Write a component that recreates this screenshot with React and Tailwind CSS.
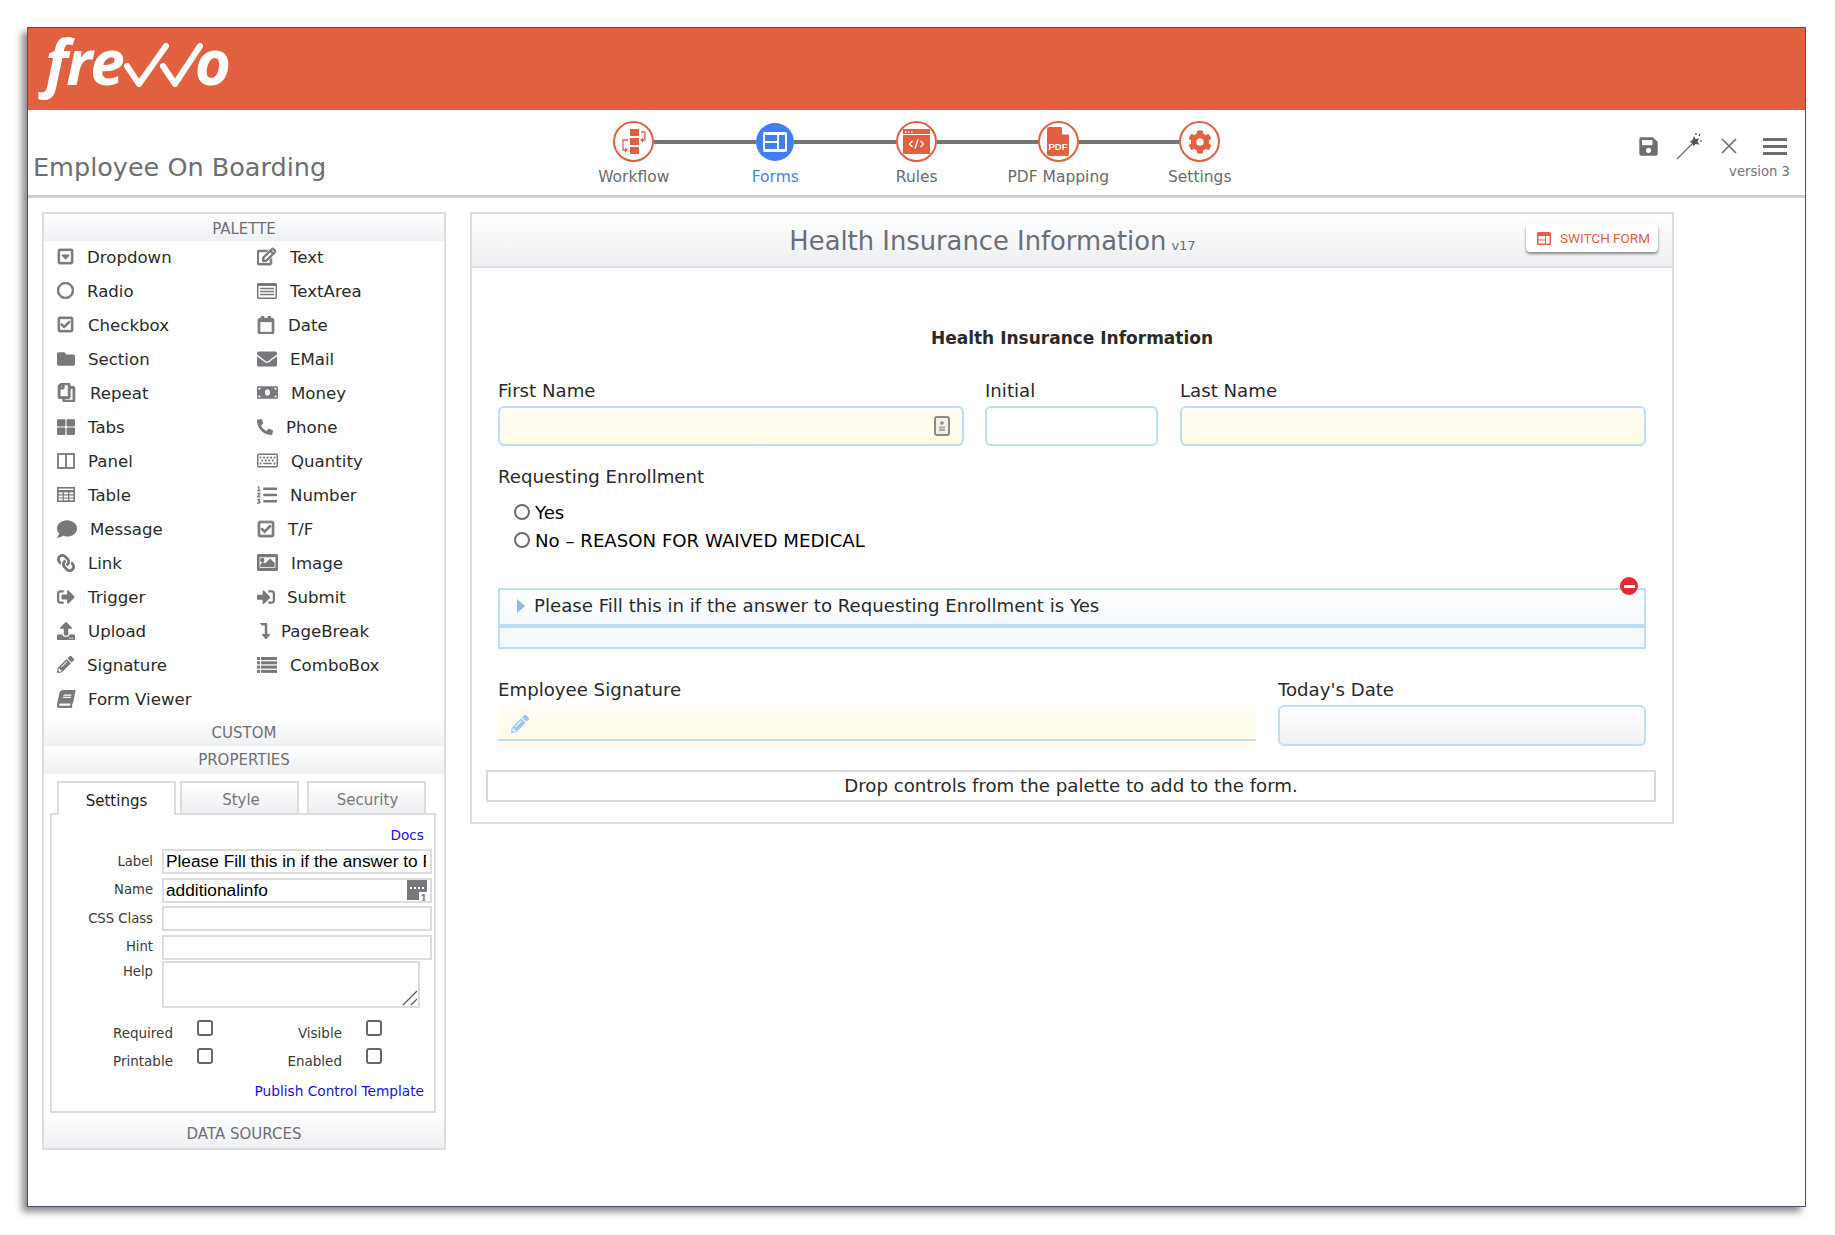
import React from "react";
import {
  FaRegCaretSquareDown, FaRegCircle, FaRegCheckSquare, FaFolder, FaRegCopy, FaThLarge, FaComment,
  FaLink, FaSignOutAlt, FaUpload, FaPencilAlt, FaBook, FaRegEdit, FaRegCalendar, FaEnvelope, FaMoneyBill,
  FaPhone, FaRegKeyboard, FaListOl, FaRegImage, FaSignInAlt, FaLevelDownAlt, FaCog, FaSave,
} from "react-icons/fa";

const ORANGE = "#e06040";
const heavy = { stroke: "currentColor", strokeWidth: 28 };

function PanelIcon() {
  return (
    <svg width="18" height="16" viewBox="0 0 18 16" fill="none" stroke="currentColor" strokeWidth="1.8">
      <rect x="1" y="1" width="16" height="14" />
      <path d="M9 1v14" />
    </svg>
  );
}

function TableIcon() {
  return (
    <svg width="18" height="15" viewBox="0 0 18 15" fill="none" stroke="currentColor">
      <rect x="0.8" y="0.8" width="16.400" height="13.400" strokeWidth="1.600" />
      <path d="M0 4.200h18" strokeWidth="2.400" />
      <path d="M0 7.800h18M0 11h18M6.300 3v12M11.700 3v12" strokeWidth="1.200" />
    </svg>
  );
}

function TextAreaIcon() {
  return (
    <svg width="20" height="16" viewBox="0 0 20 16">
      <rect width="20" height="16" rx="1.5" fill="currentColor" />
      <rect x="1.5" y="3" width="17" height="11.5" fill="#fff" />
      <path d="M3 5.5h14M3 8.5h14M3 11.5h14" stroke="currentColor" strokeWidth="1.4" />
    </svg>
  );
}

function ComboIcon() {
  return (
    <svg width="20" height="16" viewBox="0 0 20 16" fill="currentColor">
      <rect y="0" width="3" height="3" />
      <rect y="4.300" width="3" height="3" />
      <rect y="8.600" width="3" height="3" />
      <rect y="12.900" width="3" height="3" />
      <rect x="4" y="0" width="16" height="3" />
      <rect x="4" y="4.300" width="16" height="3" />
      <rect x="4" y="8.600" width="16" height="3" />
      <rect x="4" y="12.900" width="16" height="3" />
    </svg>
  );
}

const leftItems = [
  { icon: <FaRegCaretSquareDown size={17} {...heavy} />, label: "Dropdown", w: "w-[30px]" },
  { icon: <FaRegCircle size={17} {...heavy} />, label: "Radio", w: "w-[30px]" },
  { icon: <FaRegCheckSquare size={17} {...heavy} />, label: "Checkbox", w: "w-[31px]" },
  { icon: <FaFolder size={18} />, label: "Section", w: "w-[31px]" },
  { icon: <FaRegCopy size={19} className="-scale-x-100" {...heavy} />, label: "Repeat", w: "w-[33px]" },
  { icon: <FaThLarge size={18} />, label: "Tabs", w: "w-[31px]" },
  { icon: <PanelIcon />, label: "Panel", w: "w-[31px]" },
  { icon: <TableIcon />, label: "Table", w: "w-[31px]" },
  { icon: <FaComment size={20} />, label: "Message", w: "w-[33px]" },
  { icon: <FaLink size={18} className="-scale-x-100" />, label: "Link", w: "w-[31px]" },
  { icon: <FaSignOutAlt size={18} />, label: "Trigger", w: "w-[31px]" },
  { icon: <FaUpload size={18} />, label: "Upload", w: "w-[31px]" },
  { icon: <FaPencilAlt size={17} />, label: "Signature", w: "w-[30px]" },
  { icon: <FaBook size={18} className="-skew-x-12" />, label: "Form Viewer", w: "w-[31px]" },
];

const rightItems = [
  { icon: <FaRegEdit size={19} {...heavy} />, label: "Text", w: "w-[33px]" },
  { icon: <TextAreaIcon />, label: "TextArea", w: "w-[33px]" },
  { icon: <FaRegCalendar size={18} {...heavy} />, label: "Date", w: "w-[31px]" },
  { icon: <FaEnvelope size={20} />, label: "EMail", w: "w-[33px]" },
  { icon: <FaMoneyBill size={21} />, label: "Money", w: "w-[34px]" },
  { icon: <FaPhone size={16} className="-scale-x-100" />, label: "Phone", w: "w-[29px]" },
  { icon: <FaRegKeyboard size={21} />, label: "Quantity", w: "w-[34px]" },
  { icon: <FaListOl size={20} />, label: "Number", w: "w-[33px]" },
  { icon: <FaRegCheckSquare size={18} {...heavy} />, label: "T/F", w: "w-[31px]" },
  { icon: <FaRegImage size={21} {...heavy} />, label: "Image", w: "w-[34px]" },
  { icon: <FaSignInAlt size={18} />, label: "Submit", w: "w-[30px]" },
  { icon: <FaLevelDownAlt size={16} />, label: "PageBreak", w: "w-[24px]" },
  { icon: <ComboIcon />, label: "ComboBox", w: "w-[33px]" },
];

function PaletteItem({ item }) {
  return (
    <div className="flex items-center h-[34px] text-[16.6px] text-[#2a2a2a]">
      <span className={`${item.w} shrink-0 flex items-center -mt-[3px] text-[#77777c]`}>{item.icon}</span>
      <span>{item.label}</span>
    </div>
  );
}

function SectionBar({ title, className = "pt-[3px]" }) {
  return (
    <div className={`flex items-center justify-center bg-gradient-to-b from-white to-[#edeff2] text-[15px] text-[#6f6f74] ${className}`}>
      {title}
    </div>
  );
}

function WorkflowGlyph() {
  return (
    <svg width="26" height="28" viewBox="0 0 26 28" fill={ORANGE}>
      <rect x="9" y="1" width="9" height="7" />
      <rect x="9" y="10" width="9" height="7" />
      <rect x="9" y="19" width="9" height="7" />
      <path d="M20 4h4v8h-3" fill="none" stroke={ORANGE} strokeWidth="1.3" />
      <path d="M22 9.5v5l-3-2.5z" />
      <path d="M7 12H2v10h2" fill="none" stroke={ORANGE} strokeWidth="1.3" />
      <path d="M4 19.5v5l3-2.5z" />
    </svg>
  );
}

function FormsGlyph() {
  return (
    <svg width="24" height="20" viewBox="0 0 24 20">
      <rect width="24" height="20" rx="1.5" fill="#fff" />
      <rect x="2" y="3" width="12" height="6" fill="#3f7fef" />
      <rect x="2" y="11" width="12" height="6" fill="#3f7fef" />
      <rect x="16" y="3" width="6" height="14" fill="#3f7fef" />
    </svg>
  );
}

function RulesGlyph() {
  return (
    <svg width="27" height="25" viewBox="0 0 27 25">
      <rect y="0" width="27" height="25" fill={ORANGE} />
      <path d="M0 5.5h27" stroke="#fff" strokeWidth="1" />
      <path d="M2 3h1.5M5 3h1.5M8 3h1.5" stroke="#fff" strokeWidth="1.4" />
      <path d="M9.5 12l-3 3 3 3M17.5 12l3 3-3 3M15 10.5l-3 9" fill="none" stroke="#fff" strokeWidth="1.4" />
    </svg>
  );
}

function PdfGlyph() {
  return (
    <svg width="22" height="29" viewBox="0 0 22 29">
      <path d="M2 0h12l8 8v19a2 2 0 0 1-2 2H2a2 2 0 0 1-2-2V2a2 2 0 0 1 2-2z" fill={ORANGE} />
      <path d="M15 0l7 7h-7z" fill="#fff" />
      <path d="M15.5 0.5v6.500h6.500" fill="none" stroke="#fff" strokeWidth="1" />
      <text x="11" y="23" textAnchor="middle" fontFamily="'Liberation Sans',sans-serif" fontWeight="700" fontSize="9.500" fill="#fff">PDF</text>
    </svg>
  );
}

const steps = [
  { label: "Workflow", glyph: <WorkflowGlyph /> },
  { label: "Forms", glyph: <FormsGlyph />, active: true },
  { label: "Rules", glyph: <RulesGlyph /> },
  { label: "PDF Mapping", glyph: <PdfGlyph /> },
  { label: "Settings", glyph: <FaCog size={24} color={ORANGE} /> },
];

function Step({ step, index }) {
  return (
    <div className="w-[141.5px] flex flex-col items-center">
      <div className="w-full flex items-center h-[41px]">
        <div className={`flex-1 h-[4px] ${index === 0 ? "" : "bg-[#757575]"}`} />
        <div
          className={
            step.active
              ? "w-[38px] h-[38px] rounded-full bg-[#3f7fef] flex items-center justify-center"
              : "w-[41px] h-[41px] rounded-full border-2 border-[#e06040] bg-white flex items-center justify-center"
          }
        >
          {step.glyph}
        </div>
        <div className={`flex-1 h-[4px] ${index === steps.length - 1 ? "" : "bg-[#757575]"}`} />
      </div>
      <div className={`mt-[5px] leading-[20px] text-[15.5px] ${step.active ? "text-[#4a80ee]" : "text-[#6b6b6b]"}`}>
        {step.label}
      </div>
    </div>
  );
}

function TextField({ value, icon }) {
  return (
    <div className="relative h-[25px] border-2 border-[#dcdcdc] bg-white pl-[2px] overflow-hidden whitespace-nowrap font-['Liberation_Sans',sans-serif] text-[17.3px] leading-[21px] text-black">
      <div className="w-[260px] overflow-hidden">{value}</div>
      {icon}
    </div>
  );
}

function PropRow({ label, value, icon }) {
  return (
    <div className="flex items-center">
      <div className="w-[103px] pr-[9px] text-right text-[13.2px] text-[#3a3a3a]">{label}</div>
      <div className="w-[270px]">
        <TextField value={value} icon={icon} />
      </div>
    </div>
  );
}

function CheckField({ label, labelClass }) {
  return (
    <div className="flex items-start h-[28px]">
      <div className={`${labelClass} text-right text-[13.5px] leading-[18px] text-[#3a3a3a] pt-[4px]`}>{label}</div>
      <div className="ml-[24px] w-[16px] h-[16px] rounded-[3px] border-2 border-[#666] bg-white" />
    </div>
  );
}

function NameIcon() {
  return (
    <svg className="absolute right-[2px] top-0" width="22" height="22" viewBox="0 0 22 22">
      <path d="M1 0h20v20H1z" fill="#77777c" />
      <path d="M4 8h2M8 8h2M12 8h2M16 8h2" stroke="#fff" strokeWidth="2" />
      <rect x="13" y="12" width="9" height="10" fill="#fff" />
      <text x="17.500" y="21.500" textAnchor="middle" fontFamily="'Liberation Sans',sans-serif" fontWeight="700" fontSize="11" fill="#77777c">1</text>
    </svg>
  );
}

function ContactIcon() {
  return (
    <svg className="absolute right-[12px] top-[8px]" width="16" height="20" viewBox="0 0 16 20" fill="none">
      <rect x="1" y="1" width="14" height="18" rx="2" stroke="#8a8a8a" strokeWidth="2" fill="#f4f1e4" />
      <circle cx="8" cy="7" r="1.800" fill="#8a8a8a" />
      <path d="M5 11.500h6M5 14h6" stroke="#a9a9a9" strokeWidth="2" />
    </svg>
  );
}

function FormField({ label, className, inputClass, children }) {
  return (
    <div className={className}>
      <div className="leading-[24px] text-[18.15px] text-[#2a2a2a]">{label}</div>
      <div className={`relative mt-[3px] rounded-[6px] ${inputClass}`}>{children}</div>
    </div>
  );
}

const yellowInput = "h-[40px] border-2 border-[#bfdcf8] bg-gradient-to-b from-[#fffdf6] to-[#fefde3]";

function Radio({ children }) {
  return (
    <div className="flex items-center h-[28px] text-[18.15px] text-black">
      <span className="w-[16px] h-[16px] rounded-full border-2 border-[#6d6d6d] bg-white mr-[5px] -mt-[2px]" />
      {children}
    </div>
  );
}

export default function App() {
  return (
    <div className="min-h-[1235px] bg-white pl-[27px] pt-[27px] font-['DejaVu_Sans',sans-serif]">
      <div className="w-[1779px] h-[1180px] bg-white border border-[#44546a] shadow-[-5px_5px_7px_rgba(0,0,0,0.45)]">
        {/* orange banner */}
        <div className="h-[82px] bg-[#e06040] flex items-start pl-[17px] text-white font-['Open_Sans',sans-serif] italic font-bold text-[62px] leading-[66px]">
          <span className="tracking-[-2px]">fre</span>
          <svg width="79" height="46" viewBox="0 0 79 46" className="mt-[14px] ml-[1px] -mr-[8px] shrink-0" fill="none" stroke="#fff" strokeWidth="6" strokeLinecap="round" strokeLinejoin="round">
            <path d="M3 24l12 18L42 4" />
            <path d="M39 24l12 18L76 4" />
          </svg>
          <span>o</span>
        </div>

        {/* toolbar */}
        <div className="h-[88px] flex items-start border-b-[3px] border-[#cfcfcf]">
          <div className="w-[535px] pl-[5px] pt-[40px] leading-[34px] text-[25.5px] text-[#6b6e74]">Employee On Boarding</div>
          <div className="flex pt-[11px]">
            {steps.map((s, i) => (
              <Step key={s.label} step={s} index={i} />
            ))}
          </div>
          <div className="ml-auto pr-[18px] pt-[22px] flex flex-col items-end">
            <div className="flex items-center h-[28px] text-[#6e6e6e]">
              <FaSave size={21} />
              <svg className="ml-[17px]" width="27" height="27" viewBox="0 0 27 27" fill="none">
                <path d="M1 26L19 8" stroke="#6e6e6e" strokeWidth="1.300" />
                <path d="M18 3l1.500 3 3.500-.5-1.500 3.500 2 2.500-4-.5-2 2.500-1-3.500-3-1 3-2z" fill="#555" />
                <path d="M24 1l-1 2M26 8h-2M20 0v2" stroke="#444" strokeWidth="1.200" />
              </svg>
              <svg className="ml-[18px]" width="16" height="16" viewBox="0 0 16 16" stroke="#6e6e6e" strokeWidth="1.700">
                <path d="M1 1l14 14M15 1L1 15" />
              </svg>
              <div className="ml-[26px] w-[24px] flex flex-col gap-[4px]">
                <div className="h-[3px] bg-[#6e6e6e]" />
                <div className="h-[3px] bg-[#6e6e6e]" />
                <div className="h-[3px] bg-[#6e6e6e]" />
              </div>
            </div>
            <div className="-mr-[3px] mt-[3px] leading-[18px] text-[13.2px] text-[#6e7580]">version 3</div>
          </div>
        </div>

        {/* main */}
        <div className="flex items-start pl-[14px] pt-[14px] gap-[24px]">
          {/* left column */}
          <div className="w-[404px] h-[938px] border-2 border-[#dcdcdc] flex flex-col">
            <SectionBar title="PALETTE" className="h-[27px] pt-[3px]" />
            <div className="grid grid-cols-[200px_1fr] pl-[13px] h-[476px]">
              <div>
                {leftItems.map((item) => (
                  <PaletteItem key={item.label} item={item} />
                ))}
              </div>
              <div>
                {rightItems.map((item) => (
                  <PaletteItem key={item.label} item={item} />
                ))}
              </div>
            </div>
            <SectionBar title="CUSTOM" className="h-[29px] pt-[3px]" />
            <SectionBar title="PROPERTIES" className="h-[28px] pt-[1px]" />

            <div className="pl-[13px] pt-[7px] flex text-[15px]">
              <div className="relative z-10 w-[119px] h-[34px] -mb-[2px] pt-[5px] border-2 border-b-0 border-[#dcdcdc] bg-white flex items-center justify-center text-[#222]">Settings</div>
              <div className="ml-[4px] w-[119px] h-[32px] pt-[5px] pl-[3px] border-2 border-b-0 border-[#dcdcdc] bg-gradient-to-b from-white to-[#edeff2] flex items-center justify-center text-[#77777c]">Style</div>
              <div className="ml-[8px] w-[119px] h-[32px] pt-[5px] pl-[2px] border-2 border-b-0 border-[#dcdcdc] bg-gradient-to-b from-white to-[#edeff2] flex items-center justify-center text-[#77777c]">Security</div>
            </div>
            <div className="relative ml-[6px] w-[386px] h-[300px] border-2 border-[#dcdcdc]">
              <div className="text-right pr-[10px] pt-[11px] leading-[18px] text-[13.7px] text-[#1414d8]">Docs</div>
              <div className="mt-[5px] flex flex-col gap-[3.5px] pl-[7px]">
                <PropRow label="Label" value="Please Fill this in if the answer to Requesting" />
                <PropRow label="Name" value="additionalinfo" icon={<NameIcon />} />
                <PropRow label="CSS Class" value="" />
                <PropRow label="Hint" value="" />
                <div className="flex items-start -mt-[2px]">
                  <div className="w-[103px] pr-[9px] text-right text-[13.2px] text-[#3a3a3a] pt-[1px]">Help</div>
                  <div className="relative w-[258px] h-[47px] border-2 border-[#dcdcdc] bg-white">
                    <svg className="absolute right-0 bottom-0" width="16" height="16" viewBox="0 0 16 16" stroke="#555" strokeWidth="1.200">
                      <path d="M1 15L15 1M9 15l6-6" />
                    </svg>
                  </div>
                </div>
              </div>
              <div className="pl-[7px] mt-[12px] flex flex-col">
                <div className="flex">
                  <CheckField label="Required" labelClass="w-[114px]" />
                  <CheckField label="Visible" labelClass="w-[129px]" />
                </div>
                <div className="flex">
                  <CheckField label="Printable" labelClass="w-[114px]" />
                  <CheckField label="Enabled" labelClass="w-[129px]" />
                </div>
              </div>
              <div className="text-right pr-[10px] mt-[6px] leading-[18px] text-[13.7px] text-[#1414d8]">Publish Control Template</div>
            </div>
            <SectionBar title="DATA SOURCES" className="flex-1 pt-[8px]" />
          </div>

          {/* form canvas */}
          <div className="w-[1204px] h-[612px] border-2 border-[#dcdcdc]">
            <div className="relative h-[54px] border-b-2 border-[#dcdcdc] bg-gradient-to-b from-white to-[#edeff2] flex items-baseline justify-center pt-[7px] pr-[159px] text-[#6b6e74]">
              <span className="text-[25.8px] leading-[40px]">Health Insurance Information</span>
              <span className="ml-[5px] text-[13px]">v17</span>
              <div className="absolute right-[14px] top-[10px] w-[132px] h-[28px] bg-white rounded-[4px] shadow-[0_2px_3px_rgba(0,0,0,0.45)] flex items-center pl-[11px] font-['Roboto',sans-serif] text-[13.5px] text-[#e06040]">
                <svg width="14" height="13" viewBox="0 0 14 13" className="mr-[9px]">
                  <rect width="14" height="13" rx="1.500" fill="#e06040" />
                  <rect x="1.500" y="4" width="6.500" height="3.500" fill="#fff" />
                  <rect x="1.500" y="8.500" width="6.500" height="3" fill="#fff" />
                  <rect x="9" y="4" width="3.500" height="7.500" fill="#fff" />
                </svg>
                SWITCH FORM
              </div>
            </div>

            <div className="pl-[26px] pr-[26px]">
              <div className="mt-[58px] text-center leading-[24px] text-[17px] font-bold text-[#2a2a2a]">Health Insurance Information</div>
              <div className="mt-[29px] flex gap-[21px]">
                <FormField label="First Name" className="w-[466px]" inputClass={yellowInput}>
                  <ContactIcon />
                </FormField>
                <FormField label="Initial" className="w-[173px]" inputClass="h-[40px] border-2 border-[#bfdcf8] bg-white" />
                <FormField label="Last Name" className="w-[466px] ml-[1px]" inputClass={yellowInput} />
              </div>
              <div className="mt-[19px] leading-[24px] text-[18.15px] text-[#2a2a2a]">Requesting Enrollment</div>
              <div className="mt-[10px] pl-[16px]">
                <Radio>Yes</Radio>
                <Radio>No – REASON FOR WAIVED MEDICAL</Radio>
              </div>

              <div className="relative mt-[33px] h-[61px] w-[1148px] border-2 border-[#bfdcf8] bg-gradient-to-b from-white to-[#f4f9ff]">
                <div className="h-[38px] pb-[2px] border-b-[4px] border-[#bfdcf8] bg-gradient-to-b from-white to-[#f6faff] flex items-center pl-[17px] text-[18.15px] text-[#2a2a2a]">
                  <span className="mr-[9px] w-0 h-0 border-y-[7px] border-y-transparent border-l-[8px] border-l-[#8fb8ea]" />
                  Please Fill this in if the answer to Requesting Enrollment is Yes
                </div>
                <div className="absolute -top-[13px] right-[6px] w-[18px] h-[18px] rounded-full bg-[#e02b35] flex items-center justify-center">
                  <div className="w-[11px] h-[3px] bg-white" />
                </div>
              </div>

              <div className="mt-[29px] flex gap-[22px]">
                <FormField label="Employee Signature" className="w-[758px]" inputClass="h-[41px] bg-gradient-to-b from-[#fffdf6] to-[#fefde3]">
                  <div className="h-[36px] pt-[3px] border-b-2 border-[#bfdcf8] flex items-center pl-[13px] text-[#9cc8f7]">
                    <FaPencilAlt size={18} />
                  </div>
                </FormField>
                <FormField label="Today's Date" className="w-[368px]" inputClass="h-[41px] border-2 border-[#bfdcf8] bg-gradient-to-b from-white to-[#f1f1f1]" />
              </div>
            </div>

            <div className="mt-[24px] ml-[14px] w-[1170px] h-[32px] border-2 border-[#dadada] flex items-center justify-center text-[18.2px] text-[#2a2a2a]">
              Drop controls from the palette to add to the form.
            </div>
          </div>
        </div>
      </div>
    </div>
  );
}
